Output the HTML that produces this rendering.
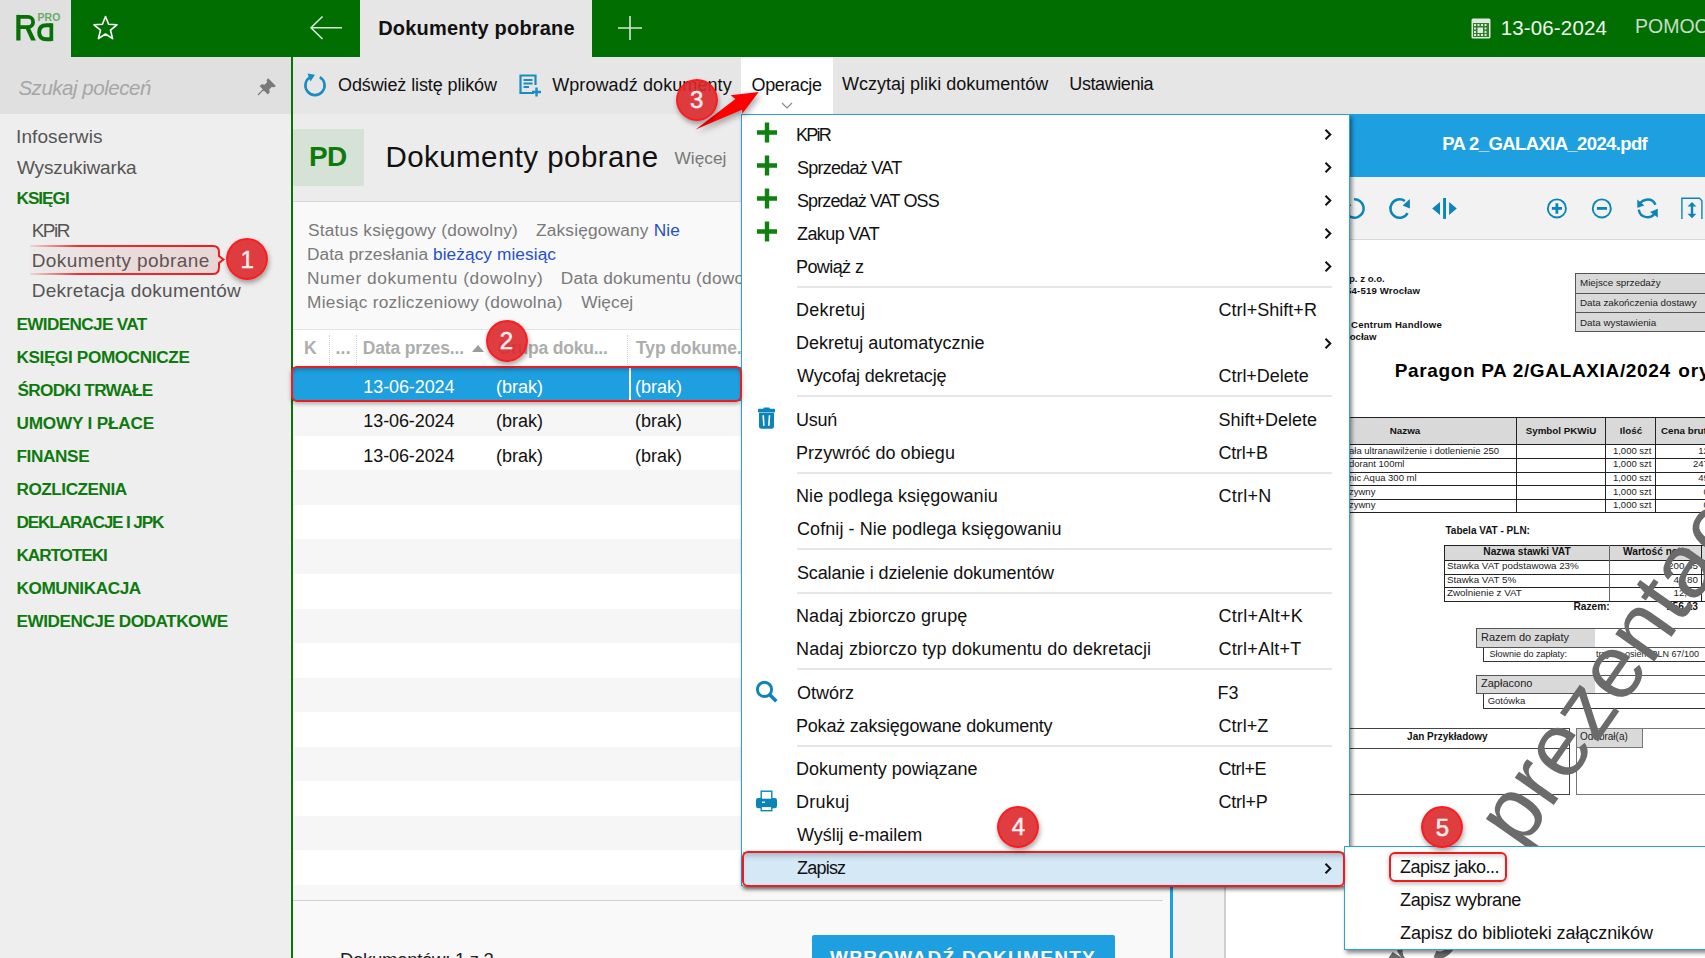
<!DOCTYPE html>
<html><head><meta charset="utf-8">
<style>
html,body{margin:0;padding:0;width:1705px;height:958px;overflow:hidden;background:#fff;}
body{position:relative;font-family:"Liberation Sans", sans-serif;}
body div, body svg{position:absolute;white-space:nowrap;}
</style></head><body>
<div style="left:0px;top:0px;width:71px;height:57px;background:#e0e0e0"></div>
<div style="left:71px;top:0px;width:1634px;height:57px;background:#006e00"></div>
<div style="left:360px;top:0px;width:232px;height:57px;background:#e6e6e6"></div>
<svg style="left:10px;top:8px" width="56" height="38" viewBox="10 8 56 38">
<g fill="#077007"><rect x="16.3" y="14.9" width="4.2" height="25.6"/><path d="M25 27.3 L29.6 27.3 L35.9 40.5 L31.1 40.5 Z"/><rect x="49.5" y="23.3" width="3.7" height="17.6"/></g>
<path d="M18.4 16.8 H27.95 A5.15 5.15 0 0 1 27.95 27.1 H18.4" fill="none" stroke="#077007" stroke-width="3.8"/>
<path d="M51.35 25.3 H46.5 Q39.15 25.3 39.15 32.2 Q39.15 39.2 46.5 39.2 H51.35" fill="none" stroke="#077007" stroke-width="3.9"/>
</svg>
<div style="left:37.40px;top:13.10px;font-size:10.4px;line-height:10.4px;color:#68ab68;font-weight:700;font-style:normal;letter-spacing:0.183px;">PRO</div>
<svg style="left:92px;top:15px" width="27" height="26" viewBox="0 0 27 26">
<path d="M13.5 1.5 L16.6 9.3 L25 9.8 L18.5 15.2 L20.6 23.6 L13.5 19 L6.4 23.6 L8.5 15.2 L2 9.8 L10.4 9.3 Z" fill="none" stroke="#fff" stroke-width="1.6" stroke-linejoin="round"/>
</svg>
<svg style="left:309px;top:15px" width="34" height="26" viewBox="0 0 34 26">
<path d="M33 12.7 H2.5 M13.5 1.5 L2 12.7 L13.5 24" fill="none" stroke="#d8e8d8" stroke-width="1.6"/>
</svg>
<div style="left:378.20px;top:17.67px;font-size:20px;line-height:20px;color:#111;font-weight:700;font-style:normal;letter-spacing:0.191px;">Dokumenty pobrane</div>
<svg style="left:617px;top:15px" width="26" height="26" viewBox="0 0 26 26">
<path d="M13 1 V25 M1 13 H25" fill="none" stroke="#d8e8d8" stroke-width="1.6"/>
</svg>
<svg style="left:1471px;top:18px" width="20" height="21" viewBox="0 0 20 21">
<rect x="0.5" y="0.5" width="19" height="20" rx="1.5" fill="#dfeadf"/>
<rect x="2" y="5" width="16" height="14" fill="#2f7f2f"/>
<g fill="#dfeadf">
<rect x="3" y="6" width="2" height="2"/><rect x="6.5" y="6" width="2" height="2"/><rect x="10" y="6" width="2" height="2"/><rect x="13.5" y="6" width="2" height="2"/>
<rect x="3" y="9.5" width="2" height="2"/><rect x="13.5" y="9.5" width="2" height="2"/>
<rect x="3" y="13" width="2" height="2"/><rect x="13.5" y="13" width="2" height="2"/>
<rect x="3" y="16" width="2" height="2"/><rect x="6.5" y="16" width="2" height="2"/><rect x="10" y="16" width="2" height="2"/><rect x="13.5" y="16" width="2" height="2"/>
<rect x="6.5" y="9.5" width="5.5" height="5.5"/>
</g></svg>
<div style="left:1500.70px;top:17.65px;font-size:20.5px;line-height:20.5px;color:#f2f7f2;font-weight:400;font-style:normal;letter-spacing:0.149px;">13-06-2024</div>
<div style="left:1635.00px;top:17.49px;font-size:19.5px;line-height:19.5px;color:#c9dcc9;font-weight:400;font-style:normal;">POMOC</div>
<div style="left:0px;top:57px;width:291px;height:57px;background:#e0e0e0"></div>
<div style="left:0px;top:114px;width:291px;height:844px;background:#eeeeee"></div>
<div style="left:291px;top:57px;width:2px;height:901px;background:#0a740a"></div>
<div style="left:18.40px;top:77.55px;font-size:20.5px;line-height:20.5px;color:#a6a6a6;font-weight:400;font-style:italic;letter-spacing:-0.464px;">Szukaj poleceń</div>
<svg style="left:257px;top:78px" width="19" height="18" viewBox="0 0 19 18">
<path d="M11 1 L18 8 L16.3 8.8 L14.7 8.2 L11.6 11.3 L12.1 14.2 L10.8 15.5 L3.5 8.2 L4.8 6.9 L7.7 7.4 L10.8 4.3 L10.2 2.7 Z M6.8 11.2 L1 17" fill="#7a7a7a" stroke="#7a7a7a" stroke-width="1.2" stroke-linejoin="round"/>
</svg>
<div style="left:16.00px;top:126.92px;font-size:19px;line-height:19px;color:#555555;font-weight:400;font-style:normal;letter-spacing:0.108px;">Infoserwis</div>
<div style="left:17.00px;top:157.52px;font-size:19px;line-height:19px;color:#555555;font-weight:400;font-style:normal;letter-spacing:-0.152px;">Wyszukiwarka</div>
<div style="left:16.50px;top:190.04px;font-size:17.2px;line-height:17.2px;color:#0e7a0e;font-weight:700;font-style:normal;letter-spacing:-1.017px;">KSIĘGI</div>
<div style="left:31.70px;top:220.72px;font-size:19px;line-height:19px;color:#555555;font-weight:400;font-style:normal;letter-spacing:-1.489px;">KPiR</div>
<div style="left:31.70px;top:250.82px;font-size:19px;line-height:19px;color:#555555;font-weight:400;font-style:normal;letter-spacing:0.404px;">Dokumenty pobrane</div>
<div style="left:31.70px;top:280.62px;font-size:19px;line-height:19px;color:#555555;font-weight:400;font-style:normal;letter-spacing:0.260px;">Dekretacja dokumentów</div>
<div style="left:16.50px;top:316.04px;font-size:17.2px;line-height:17.2px;color:#0e7a0e;font-weight:700;font-style:normal;letter-spacing:-0.665px;">EWIDENCJE VAT</div>
<div style="left:16.50px;top:349.04px;font-size:17.2px;line-height:17.2px;color:#0e7a0e;font-weight:700;font-style:normal;letter-spacing:-0.385px;">KSIĘGI POMOCNICZE</div>
<div style="left:17.50px;top:382.04px;font-size:17.2px;line-height:17.2px;color:#0e7a0e;font-weight:700;font-style:normal;letter-spacing:-0.684px;">ŚRODKI TRWAŁE</div>
<div style="left:16.50px;top:415.04px;font-size:17.2px;line-height:17.2px;color:#0e7a0e;font-weight:700;font-style:normal;letter-spacing:-0.200px;">UMOWY I PŁACE</div>
<div style="left:16.50px;top:448.04px;font-size:17.2px;line-height:17.2px;color:#0e7a0e;font-weight:700;font-style:normal;letter-spacing:-0.379px;">FINANSE</div>
<div style="left:16.50px;top:481.04px;font-size:17.2px;line-height:17.2px;color:#0e7a0e;font-weight:700;font-style:normal;letter-spacing:-0.482px;">ROZLICZENIA</div>
<div style="left:16.50px;top:514.04px;font-size:17.2px;line-height:17.2px;color:#0e7a0e;font-weight:700;font-style:normal;letter-spacing:-1.154px;">DEKLARACJE I JPK</div>
<div style="left:16.50px;top:547.04px;font-size:17.2px;line-height:17.2px;color:#0e7a0e;font-weight:700;font-style:normal;letter-spacing:-1.084px;">KARTOTEKI</div>
<div style="left:16.50px;top:580.04px;font-size:17.2px;line-height:17.2px;color:#0e7a0e;font-weight:700;font-style:normal;letter-spacing:-0.419px;">KOMUNIKACJA</div>
<div style="left:16.50px;top:613.04px;font-size:17.2px;line-height:17.2px;color:#0e7a0e;font-weight:700;font-style:normal;letter-spacing:-0.477px;">EWIDENCJE DODATKOWE</div>
<div style="left:293px;top:57px;width:1412px;height:57px;background:#e6e6e6"></div>
<div style="left:741px;top:57px;width:92px;height:57px;background:#ffffff"></div>
<svg style="left:302px;top:72px" width="26" height="26" viewBox="0 0 26 26">
<path d="M8.2 5.2 A9.6 9.6 0 1 0 17.8 5.2" fill="none" stroke="#1b8bc2" stroke-width="2.6"/>
<path d="M5.5 1.5 L13 2.8 L8.5 9.5 Z" fill="#1b8bc2"/>
</svg>
<div style="left:338.00px;top:75.76px;font-size:18px;line-height:18px;color:#111;font-weight:400;font-style:normal;letter-spacing:-0.108px;">Odśwież listę plików</div>
<svg style="left:518px;top:74px" width="24" height="24" viewBox="0 0 24 24">
<path d="M16 19 H2.5 V1.5 H17.5 V11" fill="none" stroke="#1b8bc2" stroke-width="2.2"/>
<path d="M5.5 6 H14.5 M5.5 9.5 H14.5 M5.5 13 H11" stroke="#1b8bc2" stroke-width="1.8"/>
<path d="M18.5 13.5 V22.5 M14 18 H23" stroke="#1b8bc2" stroke-width="2.4"/>
</svg>
<div style="left:552.20px;top:75.76px;font-size:18px;line-height:18px;color:#111;font-weight:400;font-style:normal;letter-spacing:0.084px;">Wprowadź dokumenty</div>
<div style="left:751.60px;top:75.76px;font-size:18px;line-height:18px;color:#111;font-weight:400;font-style:normal;letter-spacing:-0.375px;">Operacje</div>
<svg style="left:781px;top:102px" width="12" height="7" viewBox="0 0 12 7"><path d="M1 1 L6 6 L11 1" fill="none" stroke="#888" stroke-width="1.2"/></svg>
<div style="left:842.00px;top:75.46px;font-size:18px;line-height:18px;color:#111;font-weight:400;font-style:normal;letter-spacing:0.010px;">Wczytaj pliki dokumentów</div>
<div style="left:1069.30px;top:75.46px;font-size:18px;line-height:18px;color:#111;font-weight:400;font-style:normal;letter-spacing:-0.414px;">Ustawienia</div>
<div style="left:293px;top:114px;width:880px;height:88px;background:#ececec"></div>
<div style="left:293px;top:201px;width:880px;height:1px;background:#d6d6d6"></div>
<div style="left:293px;top:202px;width:880px;height:127px;background:#f9f9f9"></div>
<div style="left:293px;top:129px;width:71px;height:57px;background:#d5e2d5"></div>
<div style="left:309.00px;top:143.30px;font-size:28px;line-height:28px;color:#0e7a0e;font-weight:700;font-style:normal;letter-spacing:-0.676px;">PD</div>
<div style="left:385.40px;top:142.03px;font-size:29.5px;line-height:29.5px;color:#111;font-weight:400;font-style:normal;letter-spacing:0.441px;">Dokumenty pobrane</div>
<div style="left:674.50px;top:150.16px;font-size:17.3px;line-height:17.3px;color:#777;font-weight:400;font-style:normal;letter-spacing:0.017px;">Więcej</div>
<div style="left:308.00px;top:222.36px;font-size:17.3px;line-height:17.3px;color:#7a7a7a;font-weight:400;font-style:normal;letter-spacing:0.220px;">Status księgowy (dowolny)</div>
<div style="left:536.00px;top:222.36px;font-size:17.3px;line-height:17.3px;color:#7a7a7a;font-weight:400;font-style:normal;letter-spacing:0.181px;">Zaksięgowany <span style="color:#2450c8">Nie</span></div>
<div style="left:307.00px;top:246.16px;font-size:17.3px;line-height:17.3px;color:#7a7a7a;font-weight:400;font-style:normal;letter-spacing:0.070px;">Data przesłania <span style="color:#2450c8">bieżący miesiąc</span></div>
<div style="left:307.00px;top:270.36px;font-size:17.3px;line-height:17.3px;color:#7a7a7a;font-weight:400;font-style:normal;letter-spacing:0.578px;">Numer dokumentu (dowolny)</div>
<div style="left:560.70px;top:270.36px;font-size:17.3px;line-height:17.3px;color:#7a7a7a;font-weight:400;font-style:normal;letter-spacing:0.250px;">Data dokumentu (dowolny)</div>
<div style="left:307.00px;top:293.86px;font-size:17.3px;line-height:17.3px;color:#7a7a7a;font-weight:400;font-style:normal;letter-spacing:0.288px;">Miesiąc rozliczeniowy (dowolna)</div>
<div style="left:581.20px;top:293.86px;font-size:17.3px;line-height:17.3px;color:#7a7a7a;font-weight:400;font-style:normal;letter-spacing:0.017px;">Więcej</div>
<div style="left:293px;top:329px;width:880px;height:1px;background:#e4e4e4"></div>
<div style="left:293px;top:330px;width:880px;height:37px;background:#ffffff"></div>
<div style="left:304.00px;top:339.79px;font-size:17.5px;line-height:17.5px;color:#adadad;font-weight:700;font-style:normal;">K</div>
<div style="left:329px;top:335px;width:0;height:30px;border-left:1px dotted #d0d0d0"></div>
<div style="left:335.50px;top:339.79px;font-size:17.5px;line-height:17.5px;color:#adadad;font-weight:700;font-style:normal;letter-spacing:0.238px;">...</div>
<div style="left:356px;top:335px;width:0;height:30px;border-left:1px dotted #d0d0d0"></div>
<div style="left:362.70px;top:339.79px;font-size:17.5px;line-height:17.5px;color:#adadad;font-weight:700;font-style:normal;letter-spacing:-0.144px;">Data przes...</div>
<svg style="left:472px;top:345px" width="12" height="7" viewBox="0 0 12 7"><path d="M0 7 L6 0 L12 7 Z" fill="#9a9a9a"/></svg>
<div style="left:497.50px;top:339.79px;font-size:17.5px;line-height:17.5px;color:#adadad;font-weight:700;font-style:normal;letter-spacing:-0.202px;">Grupa doku...</div>
<div style="left:627px;top:335px;width:0;height:30px;border-left:1px dotted #d0d0d0"></div>
<div style="left:636.00px;top:339.79px;font-size:17.5px;line-height:17.5px;color:#adadad;font-weight:700;font-style:normal;letter-spacing:-0.100px;">Typ dokume...</div>
<div style="left:293px;top:366.7px;width:880px;height:35.05px;background:#1e9fe0"></div>
<div style="left:293px;top:401.25px;width:880px;height:35.05px;background:#f6f6f6"></div>
<div style="left:293px;top:435.8px;width:880px;height:35.05px;background:#ffffff"></div>
<div style="left:293px;top:470.35px;width:880px;height:35.05px;background:#f6f6f6"></div>
<div style="left:293px;top:504.9px;width:880px;height:35.05px;background:#ffffff"></div>
<div style="left:293px;top:539.45px;width:880px;height:35.05px;background:#f6f6f6"></div>
<div style="left:293px;top:574.0px;width:880px;height:35.05px;background:#ffffff"></div>
<div style="left:293px;top:608.55px;width:880px;height:35.05px;background:#f6f6f6"></div>
<div style="left:293px;top:643.1px;width:880px;height:35.05px;background:#ffffff"></div>
<div style="left:293px;top:677.65px;width:880px;height:35.05px;background:#f6f6f6"></div>
<div style="left:293px;top:712.2px;width:880px;height:35.05px;background:#ffffff"></div>
<div style="left:293px;top:746.75px;width:880px;height:35.05px;background:#f6f6f6"></div>
<div style="left:293px;top:781.3px;width:880px;height:35.05px;background:#ffffff"></div>
<div style="left:293px;top:815.85px;width:880px;height:35.05px;background:#f6f6f6"></div>
<div style="left:293px;top:850.4px;width:880px;height:35.05px;background:#ffffff"></div>
<div style="left:293px;top:885px;width:880px;height:15px;background:#f7f7f7"></div>
<div style="left:629px;top:367px;width:2px;height:34px;background:#ffffff"></div>
<div style="left:363.30px;top:377.76px;font-size:18px;line-height:18px;color:#ffffff;font-weight:400;font-style:normal;letter-spacing:-0.096px;">13-06-2024</div>
<div style="left:496.00px;top:377.76px;font-size:18px;line-height:18px;color:#ffffff;font-weight:400;font-style:normal;">(brak)</div>
<div style="left:635.00px;top:377.76px;font-size:18px;line-height:18px;color:#ffffff;font-weight:400;font-style:normal;">(brak)</div>
<div style="left:363.30px;top:412.31px;font-size:18px;line-height:18px;color:#111;font-weight:400;font-style:normal;letter-spacing:-0.096px;">13-06-2024</div>
<div style="left:496.00px;top:412.31px;font-size:18px;line-height:18px;color:#111;font-weight:400;font-style:normal;">(brak)</div>
<div style="left:635.00px;top:412.31px;font-size:18px;line-height:18px;color:#111;font-weight:400;font-style:normal;">(brak)</div>
<div style="left:363.30px;top:446.86px;font-size:18px;line-height:18px;color:#111;font-weight:400;font-style:normal;letter-spacing:-0.096px;">13-06-2024</div>
<div style="left:496.00px;top:446.86px;font-size:18px;line-height:18px;color:#111;font-weight:400;font-style:normal;">(brak)</div>
<div style="left:635.00px;top:446.86px;font-size:18px;line-height:18px;color:#111;font-weight:400;font-style:normal;">(brak)</div>
<div style="left:293px;top:900px;width:870px;height:1px;background:#d2d2d2"></div>
<div style="left:293px;top:901px;width:880px;height:57px;background:#f9f9f9"></div>
<div style="left:340.00px;top:950.84px;font-size:18.5px;line-height:18.5px;color:#222;font-weight:400;font-style:normal;letter-spacing:-0.279px;">Dokumentów: 1 z 3</div>
<div style="left:812px;top:935px;width:303px;height:40px;background:#1e9fe0;border-radius:2px"></div>
<div style="left:830.00px;top:948.32px;font-size:19px;line-height:19px;color:#fff;font-weight:700;font-style:normal;letter-spacing:1.295px;">WPROWADŹ DOKUMENTY</div>
<div style="left:1170px;top:114px;width:3px;height:844px;background:#1e9fe0"></div>
<div style="left:1173px;top:114px;width:532px;height:63px;background:#1e9fe0"></div>
<div style="left:1442.20px;top:135.34px;font-size:18.5px;line-height:18.5px;color:#fff;font-weight:700;font-style:normal;letter-spacing:-0.619px;">PA 2_GALAXIA_2024.pdf</div>
<div style="left:1173px;top:177px;width:532px;height:62px;background:#f2f2f2"></div>
<div style="left:1173px;top:239px;width:532px;height:1px;background:#d8d8d8"></div>
<div style="left:1173px;top:240px;width:52px;height:718px;background:#f2f2f2"></div>
<div style="left:1224px;top:240px;width:2px;height:718px;background:#cfcfcf"></div>
<div style="left:1226px;top:240px;width:479px;height:718px;background:#ffffff"></div>
<div style="left:1349.00px;top:274.07px;font-size:9.6px;line-height:9.6px;color:#111;font-weight:700;font-style:normal;">p. z o.o.</div>
<div style="left:1346.00px;top:285.67px;font-size:9.6px;line-height:9.6px;color:#111;font-weight:700;font-style:normal;letter-spacing:0.173px;">54-519 Wrocław</div>
<div style="left:1351.00px;top:320.47px;font-size:9.6px;line-height:9.6px;color:#111;font-weight:700;font-style:normal;letter-spacing:0.228px;">Centrum Handlowe</div>
<div style="left:1346.00px;top:331.67px;font-size:9.6px;line-height:9.6px;color:#111;font-weight:700;font-style:normal;">rocław</div>
<div style="left:1575px;top:273px;width:130px;height:59px;background:#d9d9d9;border:1px solid #555;border-right:none;box-sizing:border-box"></div>
<div style="left:1575px;top:292.5px;width:130px;height:1px;background:#555"></div>
<div style="left:1575px;top:312px;width:130px;height:1px;background:#555"></div>
<div style="left:1580.00px;top:278.10px;font-size:9.8px;line-height:9.8px;color:#222;font-weight:400;font-style:normal;">Miejsce sprzedaży</div>
<div style="left:1580.00px;top:297.70px;font-size:9.8px;line-height:9.8px;color:#222;font-weight:400;font-style:normal;">Data zakończenia dostawy</div>
<div style="left:1580.00px;top:317.60px;font-size:9.8px;line-height:9.8px;color:#222;font-weight:400;font-style:normal;">Data wystawienia</div>
<div style="left:1394.70px;top:360.82px;font-size:19px;line-height:19px;color:#000;font-weight:700;font-style:normal;letter-spacing:0.651px;">Paragon PA 2/GALAXIA/2024</div>
<div style="left:1678.20px;top:360.82px;font-size:19px;line-height:19px;color:#000;font-weight:700;font-style:normal;letter-spacing:0.900px;">oryginał</div>
<div style="left:1349px;top:417px;width:356px;height:27px;background:#d9d9d9"></div>
<div style="left:1349px;top:417px;width:356px;height:1.2px;background:#222"></div>
<div style="left:1349px;top:443.5px;width:356px;height:1.2px;background:#222"></div>
<div style="left:1349px;top:457.5px;width:356px;height:1.2px;background:#222"></div>
<div style="left:1349px;top:471.5px;width:356px;height:1.2px;background:#222"></div>
<div style="left:1349px;top:485px;width:356px;height:1.2px;background:#222"></div>
<div style="left:1349px;top:498.5px;width:356px;height:1.2px;background:#222"></div>
<div style="left:1349px;top:512px;width:356px;height:1.2px;background:#222"></div>
<div style="left:1516px;top:417px;width:1.2px;height:96px;background:#222"></div>
<div style="left:1605px;top:417px;width:1.2px;height:96px;background:#222"></div>
<div style="left:1655px;top:417px;width:1.2px;height:96px;background:#222"></div>
<div style="left:1405.00px;top:425.60px;font-size:9.8px;line-height:9.8px;color:#111;font-weight:700;font-style:normal;transform:translateX(-50%);">Nazwa</div>
<div style="left:1561.00px;top:425.60px;font-size:9.8px;line-height:9.8px;color:#111;font-weight:700;font-style:normal;transform:translateX(-50%);">Symbol PKWiU</div>
<div style="left:1631.00px;top:425.60px;font-size:9.8px;line-height:9.8px;color:#111;font-weight:700;font-style:normal;transform:translateX(-50%);">Ilość</div>
<div style="left:1661.00px;top:425.60px;font-size:9.8px;line-height:9.8px;color:#111;font-weight:700;font-style:normal;">Cena brutto</div>
<div style="left:1349.00px;top:445.66px;font-size:9.5px;line-height:9.5px;color:#222;font-weight:400;font-style:normal;">ała ultranawilżenie i dotlenienie 250</div>
<div style="left:1651.50px;top:445.66px;font-size:9.5px;line-height:9.5px;color:#222;font-weight:400;font-style:normal;transform:translateX(-100%);">1,000 szt</div>
<div style="left:1722.00px;top:445.66px;font-size:9.5px;line-height:9.5px;color:#222;font-weight:400;font-style:normal;transform:translateX(-100%);">12,00</div>
<div style="left:1349.00px;top:459.31px;font-size:9.5px;line-height:9.5px;color:#222;font-weight:400;font-style:normal;">dorant 100ml</div>
<div style="left:1651.50px;top:459.31px;font-size:9.5px;line-height:9.5px;color:#222;font-weight:400;font-style:normal;transform:translateX(-100%);">1,000 szt</div>
<div style="left:1722.00px;top:459.31px;font-size:9.5px;line-height:9.5px;color:#222;font-weight:400;font-style:normal;transform:translateX(-100%);">247,00</div>
<div style="left:1349.00px;top:472.96px;font-size:9.5px;line-height:9.5px;color:#222;font-weight:400;font-style:normal;">nic Aqua 300 ml</div>
<div style="left:1651.50px;top:472.96px;font-size:9.5px;line-height:9.5px;color:#222;font-weight:400;font-style:normal;transform:translateX(-100%);">1,000 szt</div>
<div style="left:1722.00px;top:472.96px;font-size:9.5px;line-height:9.5px;color:#222;font-weight:400;font-style:normal;transform:translateX(-100%);">49,00</div>
<div style="left:1349.00px;top:486.61px;font-size:9.5px;line-height:9.5px;color:#222;font-weight:400;font-style:normal;">zywny</div>
<div style="left:1651.50px;top:486.61px;font-size:9.5px;line-height:9.5px;color:#222;font-weight:400;font-style:normal;transform:translateX(-100%);">1,000 szt</div>
<div style="left:1722.00px;top:486.61px;font-size:9.5px;line-height:9.5px;color:#222;font-weight:400;font-style:normal;transform:translateX(-100%);">0,00</div>
<div style="left:1349.00px;top:500.26px;font-size:9.5px;line-height:9.5px;color:#222;font-weight:400;font-style:normal;">zywny</div>
<div style="left:1651.50px;top:500.26px;font-size:9.5px;line-height:9.5px;color:#222;font-weight:400;font-style:normal;transform:translateX(-100%);">1,000 szt</div>
<div style="left:1722.00px;top:500.26px;font-size:9.5px;line-height:9.5px;color:#222;font-weight:400;font-style:normal;transform:translateX(-100%);">0,00</div>
<div style="left:1445.50px;top:526.24px;font-size:10px;line-height:10px;color:#111;font-weight:700;font-style:normal;">Tabela VAT - PLN:</div>
<div style="left:1443.5px;top:545.3px;width:262px;height:15px;background:#d9d9d9"></div>
<div style="left:1443.5px;top:545.3px;width:262px;height:1.2px;background:#222"></div>
<div style="left:1443.5px;top:560px;width:262px;height:1.2px;background:#222"></div>
<div style="left:1443.5px;top:573.5px;width:262px;height:1.2px;background:#222"></div>
<div style="left:1443.5px;top:587.2px;width:262px;height:1.2px;background:#222"></div>
<div style="left:1443.5px;top:600.6px;width:262px;height:1.2px;background:#222"></div>
<div style="left:1443.5px;top:545.3px;width:1.2px;height:56px;background:#222"></div>
<div style="left:1609px;top:545.3px;width:1.2px;height:56px;background:#666"></div>
<div style="left:1701px;top:545.3px;width:1.2px;height:56px;background:#222"></div>
<div style="left:1527.00px;top:546.57px;font-size:10.2px;line-height:10.2px;color:#111;font-weight:700;font-style:normal;transform:translateX(-50%);">Nazwa stawki VAT</div>
<div style="left:1623.00px;top:546.57px;font-size:10.2px;line-height:10.2px;color:#111;font-weight:700;font-style:normal;">Wartość netto</div>
<div style="left:1447.00px;top:561.20px;font-size:9.8px;line-height:9.8px;color:#222;font-weight:400;font-style:normal;">Stawka VAT podstawowa 23%</div>
<div style="left:1447.00px;top:574.50px;font-size:9.8px;line-height:9.8px;color:#222;font-weight:400;font-style:normal;">Stawka VAT 5%</div>
<div style="left:1447.00px;top:588.30px;font-size:9.8px;line-height:9.8px;color:#222;font-weight:400;font-style:normal;">Zwolnienie z VAT</div>
<div style="left:1698.00px;top:561.20px;font-size:9.8px;line-height:9.8px;color:#222;font-weight:400;font-style:normal;transform:translateX(-100%);">200,35</div>
<div style="left:1698.00px;top:574.50px;font-size:9.8px;line-height:9.8px;color:#222;font-weight:400;font-style:normal;transform:translateX(-100%);">43,80</div>
<div style="left:1698.00px;top:588.30px;font-size:9.8px;line-height:9.8px;color:#222;font-weight:400;font-style:normal;transform:translateX(-100%);">12,33</div>
<div style="left:1573.50px;top:601.97px;font-size:10.2px;line-height:10.2px;color:#111;font-weight:700;font-style:normal;">Razem:</div>
<div style="left:1698.00px;top:601.97px;font-size:10.2px;line-height:10.2px;color:#111;font-weight:700;font-style:normal;transform:translateX(-100%);">256,13</div>
<div style="left:1476px;top:628.4px;width:119.5px;height:20px;background:#d9d9d9;border:1px solid #555;box-sizing:border-box"></div>
<div style="left:1595px;top:628.4px;width:110px;height:20px;background:#fff;border:1px solid #555;border-left:none;border-right:none;box-sizing:border-box"></div>
<div style="left:1483px;top:647.5px;width:222px;height:14px;background:#fff;border:1px solid #333;border-top:none;border-right:none;box-sizing:border-box"></div>
<div style="left:1481.00px;top:631.79px;font-size:11px;line-height:11px;color:#222;font-weight:400;font-style:normal;">Razem do zapłaty</div>
<div style="left:1489.50px;top:649.98px;font-size:9px;line-height:9px;color:#222;font-weight:400;font-style:normal;">Słownie do zapłaty:</div>
<div style="left:1699.00px;top:649.98px;font-size:9px;line-height:9px;color:#222;font-weight:400;font-style:normal;transform:translateX(-100%);">trzysta osiem PLN 67/100</div>
<div style="left:1476px;top:674.9px;width:119.5px;height:19.5px;background:#d9d9d9;border:1px solid #555;box-sizing:border-box"></div>
<div style="left:1595px;top:674.9px;width:110px;height:19.5px;background:#fff;border:1px solid #555;border-left:none;border-right:none;box-sizing:border-box"></div>
<div style="left:1483px;top:694px;width:222px;height:14.5px;background:#fff;border:1px solid #333;border-top:none;border-right:none;box-sizing:border-box"></div>
<div style="left:1481.00px;top:678.29px;font-size:11px;line-height:11px;color:#222;font-weight:400;font-style:normal;">Zapłacono</div>
<div style="left:1487.70px;top:695.76px;font-size:9.5px;line-height:9.5px;color:#222;font-weight:400;font-style:normal;">Gotówka</div>
<div style="left:1349px;top:728px;width:221px;height:67px;border:1px solid #444;border-left:none;box-sizing:border-box"></div>
<div style="left:1349px;top:747.5px;width:221px;height:1px;background:#444"></div>
<div style="left:1447.40px;top:732.33px;font-size:10px;line-height:10px;color:#111;font-weight:700;font-style:normal;transform:translateX(-50%);">Jan Przykładowy</div>
<div style="left:1576px;top:728px;width:129px;height:67px;border:1px solid #777;border-right:none;box-sizing:border-box"></div>
<div style="left:1576px;top:728px;width:66.5px;height:20px;background:#d9d9d9;border:1px solid #777;box-sizing:border-box"></div>
<div style="left:1580.00px;top:732.33px;font-size:10px;line-height:10px;color:#222;font-weight:400;font-style:normal;">Odebrał(a)</div>
<svg style="left:1226px;top:240px" width="479" height="718" viewBox="1226 240 479 718"><g transform="translate(1521.5 851) rotate(-55)" font-family="Liberation Sans" font-size="90" fill="#6b6b6b"><text x="0" y="0">prezentacyjna</text><text x="-25" y="0" text-anchor="end">Wersja</text></g></svg>
<svg style="left:1173px;top:177px" width="532" height="62" viewBox="1173 177 532 62">
<g fill="none" stroke="#0b84ba">
<path d="M1354 199.3 A9.2 9.2 0 1 1 1346.5 213.1" stroke-width="2.5"/>
<path d="M1404.9 201 A9.2 9.2 0 1 0 1407.6 213.1" stroke-width="2.5"/>
<circle cx="1556.9" cy="208.4" r="9.05" stroke-width="1.9"/>
<circle cx="1601.8" cy="208.4" r="9.05" stroke-width="1.9"/>
<path d="M1638.8 207.2 A8.8 8.8 0 0 1 1655.5 204.7" stroke-width="2.4"/>
<path d="M1655.5 212.1 A8.8 8.8 0 0 1 1638.8 209.6" stroke-width="2.4"/>
<path d="M1681.9 219 V198.3 H1699.5 L1701.9 200.7 V219" stroke-width="1.4"/>
</g>
<g fill="#0b84ba">
<path d="M1409.9 198.9 L1409.9 208.5 L1402.6 205.5 Z"/>
<path d="M1344.2 198.9 L1344.2 208.5 L1351.5 205.5 Z"/>
<rect x="1551.9" y="207" width="10.1" height="2.8"/><rect x="1555.5" y="203.3" width="2.8" height="10.4"/>
<rect x="1596.9" y="207" width="10.1" height="2.8"/>
<path d="M1637.3 199.4 L1637.3 207.8 L1644.4 205.5 Z"/>
<path d="M1657.8 208.8 L1657.8 217.6 L1650 211.9 Z"/>
<rect x="1690.8" y="205" width="2.4" height="10"/>
<path d="M1692 202 L1687.5 206.5 H1696.3 Z M1692 218.2 L1687.5 213.7 H1696.3 Z"/>
<path d="M1432.2 208.5 L1440 201.9 V215 Z M1456.8 208.5 L1449.1 201.9 V215 Z"/>
<rect x="1443.1" y="198" width="2.9" height="20.9"/>
</g>
</svg>
<div style="left:741px;top:114px;width:609px;height:772px;background:#fff;border:1px solid #2e9ee0;box-sizing:border-box;box-shadow:2px 3px 4px rgba(0,0,0,0.45)"></div>
<div style="left:743px;top:852px;width:602px;height:34px;background:#d4e8f6;box-shadow:inset 0 6px 6px -3px rgba(40,60,80,0.35)"></div>
<div style="left:796.00px;top:125.76px;font-size:18px;line-height:18px;color:#111;font-weight:400;font-style:normal;letter-spacing:-1.770px;">KPiR</div>
<svg style="left:1323px;top:128.0px" width="10" height="13" viewBox="0 0 10 13"><path d="M2.5 1.8 L7.3 6.5 L2.5 11.2" fill="none" stroke="#111" stroke-width="2"/></svg>
<svg style="left:756px;top:121.9px" width="22" height="21" viewBox="0 0 22 21"><path d="M11 0.5 V20.5 M1 10.5 H21" stroke="#108010" stroke-width="4.4"/></svg>
<div style="left:797.00px;top:158.76px;font-size:18px;line-height:18px;color:#111;font-weight:400;font-style:normal;letter-spacing:-0.744px;">Sprzedaż VAT</div>
<svg style="left:1323px;top:161.0px" width="10" height="13" viewBox="0 0 10 13"><path d="M2.5 1.8 L7.3 6.5 L2.5 11.2" fill="none" stroke="#111" stroke-width="2"/></svg>
<svg style="left:756px;top:154.9px" width="22" height="21" viewBox="0 0 22 21"><path d="M11 0.5 V20.5 M1 10.5 H21" stroke="#108010" stroke-width="4.4"/></svg>
<div style="left:797.00px;top:191.76px;font-size:18px;line-height:18px;color:#111;font-weight:400;font-style:normal;letter-spacing:-0.892px;">Sprzedaż VAT OSS</div>
<svg style="left:1323px;top:194.0px" width="10" height="13" viewBox="0 0 10 13"><path d="M2.5 1.8 L7.3 6.5 L2.5 11.2" fill="none" stroke="#111" stroke-width="2"/></svg>
<svg style="left:756px;top:187.9px" width="22" height="21" viewBox="0 0 22 21"><path d="M11 0.5 V20.5 M1 10.5 H21" stroke="#108010" stroke-width="4.4"/></svg>
<div style="left:797.00px;top:224.76px;font-size:18px;line-height:18px;color:#111;font-weight:400;font-style:normal;letter-spacing:-0.584px;">Zakup VAT</div>
<svg style="left:1323px;top:227.0px" width="10" height="13" viewBox="0 0 10 13"><path d="M2.5 1.8 L7.3 6.5 L2.5 11.2" fill="none" stroke="#111" stroke-width="2"/></svg>
<svg style="left:756px;top:220.9px" width="22" height="21" viewBox="0 0 22 21"><path d="M11 0.5 V20.5 M1 10.5 H21" stroke="#108010" stroke-width="4.4"/></svg>
<div style="left:796.00px;top:257.76px;font-size:18px;line-height:18px;color:#111;font-weight:400;font-style:normal;letter-spacing:-0.589px;">Powiąż z</div>
<svg style="left:1323px;top:260.0px" width="10" height="13" viewBox="0 0 10 13"><path d="M2.5 1.8 L7.3 6.5 L2.5 11.2" fill="none" stroke="#111" stroke-width="2"/></svg>
<div style="left:797px;top:285.9px;width:535px;height:2px;background:#e6e6e6"></div>
<div style="left:796.00px;top:301.26px;font-size:18px;line-height:18px;color:#111;font-weight:400;font-style:normal;letter-spacing:0.268px;">Dekretuj</div>
<div style="left:1218.50px;top:301.26px;font-size:18px;line-height:18px;color:#111;font-weight:400;font-style:normal;letter-spacing:0.033px;">Ctrl+Shift+R</div>
<div style="left:796.00px;top:334.26px;font-size:18px;line-height:18px;color:#111;font-weight:400;font-style:normal;letter-spacing:0.020px;">Dekretuj automatycznie</div>
<svg style="left:1323px;top:336.5px" width="10" height="13" viewBox="0 0 10 13"><path d="M2.5 1.8 L7.3 6.5 L2.5 11.2" fill="none" stroke="#111" stroke-width="2"/></svg>
<div style="left:797.00px;top:367.26px;font-size:18px;line-height:18px;color:#111;font-weight:400;font-style:normal;letter-spacing:-0.141px;">Wycofaj dekretację</div>
<div style="left:1218.50px;top:367.26px;font-size:18px;line-height:18px;color:#111;font-weight:400;font-style:normal;letter-spacing:-0.033px;">Ctrl+Delete</div>
<div style="left:797px;top:395.4px;width:535px;height:2px;background:#e6e6e6"></div>
<div style="left:796.00px;top:410.76px;font-size:18px;line-height:18px;color:#111;font-weight:400;font-style:normal;letter-spacing:-0.237px;">Usuń</div>
<div style="left:1218.50px;top:410.76px;font-size:18px;line-height:18px;color:#111;font-weight:400;font-style:normal;letter-spacing:-0.014px;">Shift+Delete</div>
<svg style="left:745px;top:400px" width="55" height="40" viewBox="745 400 55 40"><g fill="#0b84ba"><rect x="758" y="408.8" width="17" height="3.6" rx="0.6"/><rect x="763.4" y="407.6" width="6.4" height="2.5" rx="1"/><path d="M759 413 H774 V426.5 Q774 428.8 771.7 428.8 H761.3 Q759 428.8 759 426.5 Z"/></g><path d="M763.2 415.3 L763.9 425.7 M769.5 415.3 L768.8 425.7" stroke="#fff" stroke-width="1.6"/></svg>
<div style="left:796.00px;top:443.76px;font-size:18px;line-height:18px;color:#111;font-weight:400;font-style:normal;letter-spacing:0.049px;">Przywróć do obiegu</div>
<div style="left:1218.50px;top:443.76px;font-size:18px;line-height:18px;color:#111;font-weight:400;font-style:normal;letter-spacing:-0.221px;">Ctrl+B</div>
<div style="left:797px;top:471.9px;width:535px;height:2px;background:#e6e6e6"></div>
<div style="left:796.00px;top:487.26px;font-size:18px;line-height:18px;color:#111;font-weight:400;font-style:normal;letter-spacing:0.072px;">Nie podlega księgowaniu</div>
<div style="left:1218.50px;top:487.26px;font-size:18px;line-height:18px;color:#111;font-weight:400;font-style:normal;letter-spacing:0.259px;">Ctrl+N</div>
<div style="left:797.00px;top:520.26px;font-size:18px;line-height:18px;color:#111;font-weight:400;font-style:normal;letter-spacing:0.073px;">Cofnij - Nie podlega księgowaniu</div>
<div style="left:797px;top:548.4px;width:535px;height:2px;background:#e6e6e6"></div>
<div style="left:797.00px;top:563.76px;font-size:18px;line-height:18px;color:#111;font-weight:400;font-style:normal;letter-spacing:-0.135px;">Scalanie i dzielenie dokumentów</div>
<div style="left:797px;top:591.9px;width:535px;height:2px;background:#e6e6e6"></div>
<div style="left:796.00px;top:607.26px;font-size:18px;line-height:18px;color:#111;font-weight:400;font-style:normal;letter-spacing:0.059px;">Nadaj zbiorczo grupę</div>
<div style="left:1218.50px;top:607.26px;font-size:18px;line-height:18px;color:#111;font-weight:400;font-style:normal;letter-spacing:0.253px;">Ctrl+Alt+K</div>
<div style="left:796.00px;top:640.26px;font-size:18px;line-height:18px;color:#111;font-weight:400;font-style:normal;letter-spacing:0.144px;">Nadaj zbiorczo typ dokumentu do dekretacji</div>
<div style="left:1218.50px;top:640.26px;font-size:18px;line-height:18px;color:#111;font-weight:400;font-style:normal;letter-spacing:0.186px;">Ctrl+Alt+T</div>
<div style="left:797px;top:668.4px;width:535px;height:2px;background:#e6e6e6"></div>
<div style="left:797.00px;top:683.76px;font-size:18px;line-height:18px;color:#111;font-weight:400;font-style:normal;letter-spacing:-0.021px;">Otwórz</div>
<div style="left:1217.50px;top:683.76px;font-size:18px;line-height:18px;color:#111;font-weight:400;font-style:normal;">F3</div>
<svg style="left:745px;top:675px" width="45" height="35" viewBox="745 675 45 35"><circle cx="764.5" cy="689.4" r="7.1" fill="none" stroke="#0b84ba" stroke-width="2.9"/><path d="M769.3 694.2 L776.3 701.2" stroke="#0b84ba" stroke-width="3.6"/></svg>
<div style="left:796.00px;top:716.76px;font-size:18px;line-height:18px;color:#111;font-weight:400;font-style:normal;letter-spacing:-0.206px;">Pokaż zaksięgowane dokumenty</div>
<div style="left:1218.50px;top:716.76px;font-size:18px;line-height:18px;color:#111;font-weight:400;font-style:normal;letter-spacing:0.059px;">Ctrl+Z</div>
<div style="left:797px;top:744.9px;width:535px;height:2px;background:#e6e6e6"></div>
<div style="left:796.00px;top:760.26px;font-size:18px;line-height:18px;color:#111;font-weight:400;font-style:normal;letter-spacing:-0.033px;">Dokumenty powiązane</div>
<div style="left:1218.50px;top:760.26px;font-size:18px;line-height:18px;color:#111;font-weight:400;font-style:normal;letter-spacing:-0.501px;">Ctrl+E</div>
<div style="left:796.00px;top:793.26px;font-size:18px;line-height:18px;color:#111;font-weight:400;font-style:normal;letter-spacing:0.237px;">Drukuj</div>
<div style="left:1218.50px;top:793.26px;font-size:18px;line-height:18px;color:#111;font-weight:400;font-style:normal;letter-spacing:-0.261px;">Ctrl+P</div>
<svg style="left:745px;top:785px" width="45" height="35" viewBox="745 785 45 35"><rect x="756" y="798" width="21" height="10.2" rx="2.2" fill="#0b84ba"/><rect x="761.2" y="791.2" width="10.6" height="8.2" fill="#fff" stroke="#0b84ba" stroke-width="1.4"/><rect x="761.2" y="806.4" width="10.6" height="4.3" fill="#fff" stroke="#0b84ba" stroke-width="1.4"/><rect x="762" y="801.6" width="3" height="1.3" fill="#fff"/></svg>
<div style="left:797.00px;top:826.26px;font-size:18px;line-height:18px;color:#111;font-weight:400;font-style:normal;letter-spacing:-0.046px;">Wyślij e-mailem</div>
<div style="left:797.00px;top:859.26px;font-size:18px;line-height:18px;color:#111;font-weight:400;font-style:normal;letter-spacing:-0.783px;">Zapisz</div>
<svg style="left:1323px;top:861.5px" width="10" height="13" viewBox="0 0 10 13"><path d="M2.5 1.8 L7.3 6.5 L2.5 11.2" fill="none" stroke="#111" stroke-width="2"/></svg>
<div style="left:1344px;top:846px;width:400px;height:104px;background:#fff;border:1px solid #2e9ee0;box-sizing:border-box;box-shadow:2px 3px 4px rgba(0,0,0,0.45)"></div>
<div style="left:1400.00px;top:858.06px;font-size:18px;line-height:18px;color:#111;font-weight:400;font-style:normal;letter-spacing:-0.503px;">Zapisz jako...</div>
<div style="left:1400.00px;top:890.76px;font-size:18px;line-height:18px;color:#111;font-weight:400;font-style:normal;letter-spacing:-0.365px;">Zapisz wybrane</div>
<div style="left:1400.00px;top:923.56px;font-size:18px;line-height:18px;color:#111;font-weight:400;font-style:normal;letter-spacing:-0.072px;">Zapisz do biblioteki załączników</div>
<div style="left:291px;top:366px;width:451px;height:36px;border:2.5px solid #ee1c1c;border-radius:6px;box-sizing:border-box;box-shadow:0 2px 4px rgba(0,0,0,0.3), inset 0 4px 4px -2px rgba(0,0,0,0.25)"></div>
<div style="left:742px;top:851px;width:603px;height:35.5px;border:2.5px solid #ee1c1c;border-radius:6px;box-sizing:border-box;box-shadow:0 2px 4px rgba(0,0,0,0.3)"></div>
<div style="left:1389px;top:852px;width:118px;height:30px;border:2.5px solid #ee1c1c;border-radius:6px;box-sizing:border-box;box-shadow:0 2px 4px rgba(0,0,0,0.25), inset 0 4px 4px -2px rgba(0,0,0,0.18)"></div>
<svg style="left:20px;top:240px" width="210" height="40" viewBox="20 240 210 40">
<defs><linearGradient id="lg" x1="0" x2="1"><stop offset="0" stop-color="#ee1c1c" stop-opacity="0.1"/><stop offset="0.25" stop-color="#ee1c1c" stop-opacity="0.9"/><stop offset="1" stop-color="#ee1c1c"/></linearGradient>
<linearGradient id="lf" x1="0" x2="1"><stop offset="0" stop-color="#c04040" stop-opacity="0.02"/><stop offset="0.4" stop-color="#c04040" stop-opacity="0.1"/><stop offset="1" stop-color="#c04040" stop-opacity="0.14"/></linearGradient></defs>
<path d="M30 246 H213 Q219 246 219 252 V256 L223.5 259.5 L219 263 V267 Q219 274 213 274 H30" fill="url(#lf)" stroke="url(#lg)" stroke-width="2"/>
</svg>
<svg style="left:680px;top:80px;overflow:visible" width="90" height="60" viewBox="680 80 90 60"><path d="M695.6 129.5 L742 109.8 L742.3 113.8 L758.7 91.9 L730.6 95.2 L735.4 98.9 Z" fill="#ff0000" style="filter:drop-shadow(2px 3px 3px rgba(0,0,0,0.35))"/></svg>
<div style="left:226.2px;top:238.39999999999998px;width:42px;height:42px;border-radius:50%;background:rgba(221,40,44,0.9);border:2px solid rgba(250,30,30,0.95);box-sizing:border-box;box-shadow:1px 3px 5px rgba(0,0,0,0.35)"></div>
<div style="left:247.20px;top:247.78px;font-size:24px;line-height:24px;color:#fbeeee;font-weight:400;font-style:normal;transform:translateX(-50%);-webkit-text-stroke:0.5px #fbeeee;">1</div>
<div style="left:485.5px;top:319.8px;width:42px;height:42px;border-radius:50%;background:rgba(221,40,44,0.9);border:2px solid rgba(250,30,30,0.95);box-sizing:border-box;box-shadow:1px 3px 5px rgba(0,0,0,0.35)"></div>
<div style="left:506.50px;top:329.18px;font-size:24px;line-height:24px;color:#fbeeee;font-weight:400;font-style:normal;transform:translateX(-50%);-webkit-text-stroke:0.5px #fbeeee;">2</div>
<div style="left:675.7px;top:78.6px;width:42px;height:42px;border-radius:50%;background:rgba(221,40,44,0.9);border:2px solid rgba(250,30,30,0.95);box-sizing:border-box;box-shadow:1px 3px 5px rgba(0,0,0,0.35)"></div>
<div style="left:696.70px;top:87.98px;font-size:24px;line-height:24px;color:#fbeeee;font-weight:400;font-style:normal;transform:translateX(-50%);-webkit-text-stroke:0.5px #fbeeee;">3</div>
<div style="left:997.4px;top:805.6px;width:42px;height:42px;border-radius:50%;background:rgba(221,40,44,0.9);border:2px solid rgba(250,30,30,0.95);box-sizing:border-box;box-shadow:1px 3px 5px rgba(0,0,0,0.35)"></div>
<div style="left:1018.40px;top:814.98px;font-size:24px;line-height:24px;color:#fbeeee;font-weight:400;font-style:normal;transform:translateX(-50%);-webkit-text-stroke:0.5px #fbeeee;">4</div>
<div style="left:1421.4px;top:806.2px;width:42px;height:42px;border-radius:50%;background:rgba(221,40,44,0.9);border:2px solid rgba(250,30,30,0.95);box-sizing:border-box;box-shadow:1px 3px 5px rgba(0,0,0,0.35)"></div>
<div style="left:1442.40px;top:815.58px;font-size:24px;line-height:24px;color:#fbeeee;font-weight:400;font-style:normal;transform:translateX(-50%);-webkit-text-stroke:0.5px #fbeeee;">5</div>
</body></html>
